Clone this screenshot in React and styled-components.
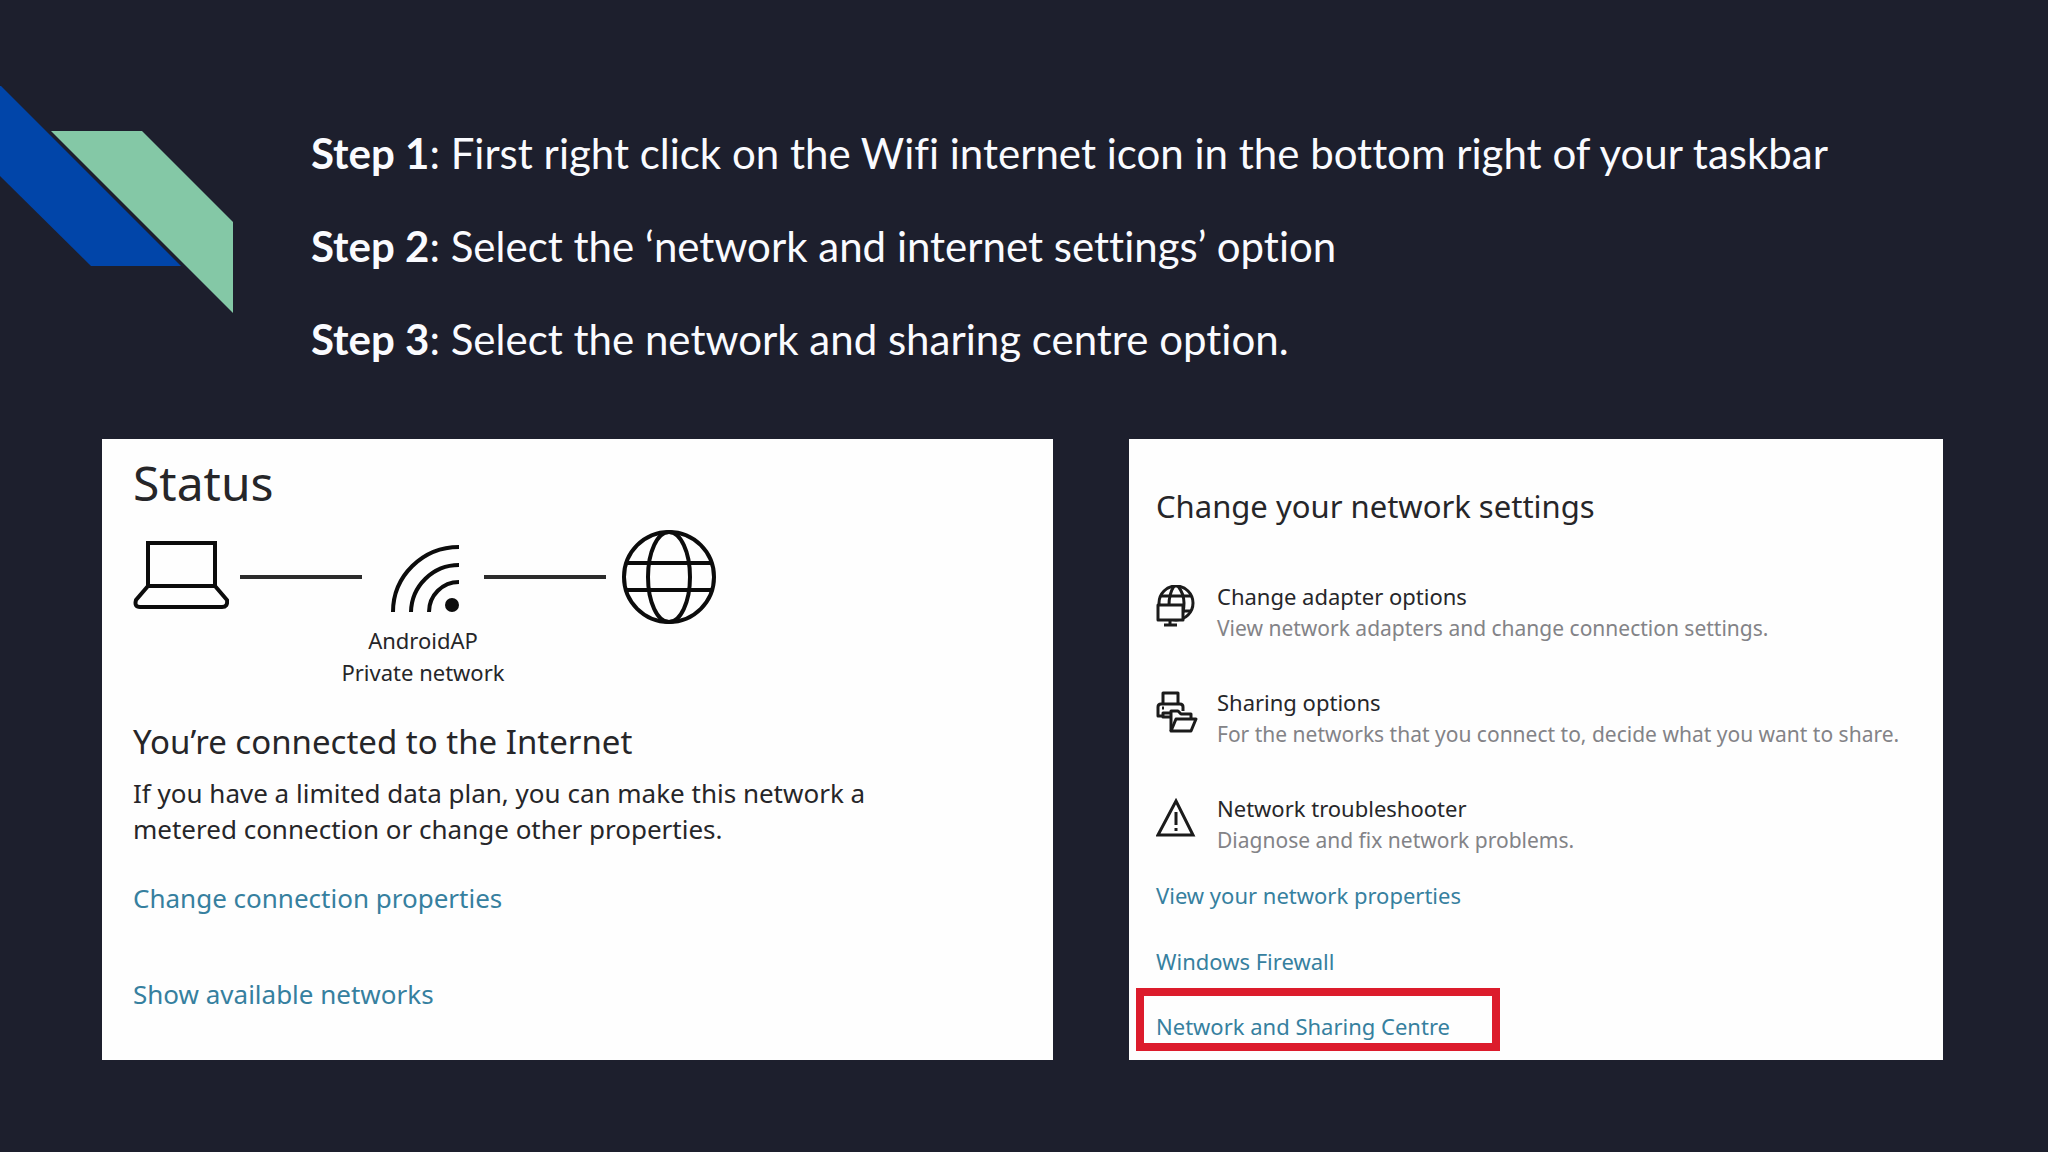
import styled, { createGlobalStyle } from "styled-components";

const GlobalStyle = createGlobalStyle`
	* {
		box-sizing: border-box;
	}

	body {
		margin: 0;
		background-color: #1d1f2d;
	}

	h1, h2, h3, p, ol, ul {
		margin: 0;
		padding: 0;
		font-weight: 400;
	}

	ol, ul {
		list-style: none;
	}
`;

const Slide = styled.main`
	min-height: 100vh;
	padding: 86px 105px 92px 0;
	background-color: #1d1f2d;
`;

const Header = styled.header`
	display: flex;
	align-items: flex-start;
	gap: 77px;
`;

const Ribbon = styled.svg`
	flex: none;
	width: 234px;
	height: 227px;
`;

const Steps = styled.ol`
	padding-top: 21px;

	font-family: Lato, sans-serif;
	font-size: 42px;
	font-variant-ligatures: none;
	line-height: 93px;
	color: #fafbff;
`;

const Cards = styled.div`
	display: grid;
	grid-template-columns: 951fr 814fr;
	gap: 76px;
	margin-top: 53px;
	padding-left: 102px;
`;

const Card = styled.section`
	font-family: "Noto Sans", sans-serif;
	color: #262629;
	background-color: #fefefe;
`;

const StatusCard = styled(Card)`
	padding: 8px 31px 48px;
	font-size: 26px;
	line-height: 36px;
`;

const SettingsCard = styled(Card)`
	padding: 45px 27px 8px;
	font-size: 22px;
	line-height: 32px;
`;

const StatusTitle = styled.h1`
	font-size: 48px;
	line-height: 72px;
`;

const Diagram = styled.div`
	display: grid;
	grid-template-columns: 107px 122px 122px 122px 111px;
	align-items: center;
	margin-top: 11px;
`;

const DiagramIcon = styled.svg`
	width: 96px;
	height: 94px;
	justify-self: ${({ $align }) => $align};

	fill: none;
	stroke: #0c0c0c;
	stroke-width: 4;
`;

const Wire = styled.span`
	height: 4px;
	background-color: #2b2b2b;
`;

const NetworkName = styled.p`
	grid-column: 2 / 5;

	font-size: 22px;
	line-height: 32px;
	text-align: center;
`;

const Connected = styled.h2`
	margin-top: 30px;
	font-size: 33px;
	line-height: 48px;
`;

const PlanNote = styled.p`
	max-width: 760px;
	margin-top: 9px;
`;

const StatusLinks = styled.nav`
	display: flex;
	flex-direction: column;
	align-items: flex-start;
	gap: 60px;
	margin-top: 33px;
`;

const Link = styled.a`
	color: #36809f;
	text-decoration: none;
`;

const SettingsTitle = styled.h2`
	font-size: 31px;
	line-height: 44px;
`;

const Options = styled.ul`
	display: flex;
	flex-direction: column;
	gap: 42px;
	margin-top: 52px;
`;

const Option = styled.li`
	display: grid;
	grid-template-columns: 61px 1fr;
`;

const OptionIcon = styled.svg`
	width: 42px;
	height: 42px;
	margin-top: 5px;

	fill: none;
	stroke: #1b1b1b;
	stroke-width: 3;
	stroke-linejoin: round;
`;

const OptionName = styled.h3`
	font-size: 22px;
`;

const OptionText = styled.p`
	color: #838387;
	font-size: 21px;
`;

const SettingsLinks = styled.nav`
	display: flex;
	flex-direction: column;
	align-items: flex-start;
	gap: 34px;
	margin-top: 23px;
`;

const MarkedLink = styled(Link)`
	width: 364px;
	margin: -23px 0 0 -20px;
	padding: 14px 0 1px 12px;
	border: 8px solid #dc1c2c;
`;

const steps = [
	"First right click on the Wifi internet icon in the bottom right of your taskbar",
	"Select the ‘network and internet settings’ option",
	"Select the network and sharing centre option.",
];

const options = [
	{
		name: "Change adapter options",
		text: "View network adapters and change connection settings.",
		icon: (
			<>
				<circle cx="20" cy="18" r="17" />
				<path d="M18 1Q13 9 13 20M22 1Q28 9 28 18T24 35" />
				<path d="M4 11H36M27 26H35" />
				<rect x="2" y="20" width="25" height="15" fill="#fefefe" />
				<path d="M14 35V40M8 40H21" />
			</>
		),
	},
	{
		name: "Sharing options",
		text: "For the networks that you connect to, decide what you want to share.",
		icon: (
			<>
				<path d="M7 12V2H22V12" />
				<path d="M7 25H2V16Q2 13 5 13H24Q27 13 27 16V20" />
				<path d="M6 17H8" />
				<path d="M14 22H7V26H14" />
				<path d="M15 40V20H22L25 23H35V28" />
				<path d="M15 40L20 28H40L35 40Z" />
			</>
		),
	},
	{
		name: "Network troubleshooter",
		text: "Diagnose and fix network problems.",
		icon: (
			<>
				<path d="M20 4L37 38H2Z" strokeLinejoin="miter" />
				<path d="M20 15V28M20 31V34" />
			</>
		),
	},
];

export default function App() {
	return (
		<>
			<GlobalStyle />
			<Slide>
				<Header>
					<Ribbon viewBox="0 0 234 227" aria-hidden="true">
						<path d="M0 -1L181 180H91L0 90Z" fill="#0145a9" />
						<path d="M51 45H142L233 136V227Z" fill="#84c8a6" />
					</Ribbon>
					<Steps>
						{steps.map((step, i) => (
							<li key={step}>
								<strong>Step {i + 1}</strong>: {step}
							</li>
						))}
					</Steps>
				</Header>
				<Cards>
					<StatusCard>
						<StatusTitle>Status</StatusTitle>
						<Diagram>
							<DiagramIcon viewBox="0 0 96 94" $align="start">
								<path d="M15 13H82V56H15Z" />
								<path d="M15 56L3 70Q1 77 7 77H89Q95 77 94 70L82 56" />
							</DiagramIcon>
							<Wire />
							<DiagramIcon viewBox="0 0 96 94" $align="center">
								<path d="M18 82A66 65 0 0 1 84 17" />
								<path d="M36 82A48 48 0 0 1 84 35" />
								<path d="M54 82A30 30 0 0 1 84 52" />
								<circle cx="77" cy="75" r="7" fill="#0c0c0c" stroke="none" />
							</DiagramIcon>
							<Wire />
							<DiagramIcon viewBox="0 0 96 94" $align="end">
								<circle cx="48" cy="47" r="45" />
								<ellipse cx="48" cy="47" rx="21" ry="45" />
								<path d="M6 33H90M6 60H90" />
							</DiagramIcon>
							<NetworkName>
								AndroidAP
								<br />
								Private network
							</NetworkName>
						</Diagram>
						<Connected>You’re connected to the Internet</Connected>
						<PlanNote>
							If you have a limited data plan, you can make this network a
							metered connection or change other properties.
						</PlanNote>
						<StatusLinks>
							<Link href="#properties">Change connection properties</Link>
							<Link href="#available">Show available networks</Link>
						</StatusLinks>
					</StatusCard>
					<SettingsCard>
						<SettingsTitle>Change your network settings</SettingsTitle>
						<Options>
							{options.map(({ name, text, icon }) => (
								<Option key={name}>
									<OptionIcon viewBox="0 0 42 42" aria-hidden="true">{icon}</OptionIcon>
									<div>
										<OptionName>{name}</OptionName>
										<OptionText>{text}</OptionText>
									</div>
								</Option>
							))}
						</Options>
						<SettingsLinks>
							<Link href="#network">View your network properties</Link>
							<Link href="#firewall">Windows Firewall</Link>
							<MarkedLink href="#sharing">Network and Sharing Centre</MarkedLink>
						</SettingsLinks>
					</SettingsCard>
				</Cards>
			</Slide>
		</>
	);
}
